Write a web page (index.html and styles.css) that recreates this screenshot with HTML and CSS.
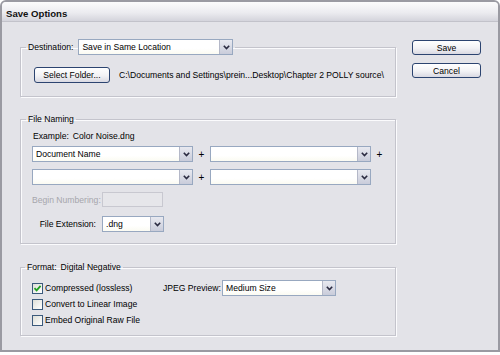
FILE: index.html
```html
<!DOCTYPE html>
<html lang="en">
<head>
    <meta charset="UTF-8">
    <title>Save Options</title>
    <link rel="stylesheet" href="styles.css">
</head>
<body>
    <div class="window">
        <div class="titlebar">Save Options</div>

        <div class="content">
            <div class="groups">
                <!-- Destino -->
                <fieldset class="group">
                    <legend class="legend-row">
                        <span>Destination:</span>
                        <div class="select sel-dest">
                            <span class="value">Save in Same Location</span>
                            <span class="arrow"><svg width="7" height="5" viewBox="0 0 7 5"><polyline points="0.8,0.8 3.5,3.6 6.2,0.8" fill="none" stroke="#2a2a40" stroke-width="1.6"/></svg></span>
                        </div>
                    </legend>
                    <div class="dest-row">
                        <button class="btn btn-folder">Select Folder...</button>
                        <span class="path">C:\Documents and Settings\prein...Desktop\Chapter 2 POLLY source\</span>
                    </div>
                </fieldset>

                <!-- Nome dos arquivos -->
                <fieldset class="group group-naming">
                    <legend class="legend-text">File Naming</legend>
                    <div class="example"><span>Example:</span><span>Color Noise.dng</span></div>

                    <div class="name-row first">
                        <div class="select sel-name">
                            <span class="value">Document Name</span>
                            <span class="arrow"><svg width="7" height="5" viewBox="0 0 7 5"><polyline points="0.8,0.8 3.5,3.6 6.2,0.8" fill="none" stroke="#2a2a40" stroke-width="1.6"/></svg></span>
                        </div>
                        <span class="plus">+</span>
                        <div class="select sel-name">
                            <span class="value"></span>
                            <span class="arrow"><svg width="7" height="5" viewBox="0 0 7 5"><polyline points="0.8,0.8 3.5,3.6 6.2,0.8" fill="none" stroke="#2a2a40" stroke-width="1.6"/></svg></span>
                        </div>
                        <span class="plus">+</span>
                    </div>

                    <div class="name-row">
                        <div class="select sel-name">
                            <span class="value"></span>
                            <span class="arrow"><svg width="7" height="5" viewBox="0 0 7 5"><polyline points="0.8,0.8 3.5,3.6 6.2,0.8" fill="none" stroke="#2a2a40" stroke-width="1.6"/></svg></span>
                        </div>
                        <span class="plus">+</span>
                        <div class="select sel-name">
                            <span class="value"></span>
                            <span class="arrow"><svg width="7" height="5" viewBox="0 0 7 5"><polyline points="0.8,0.8 3.5,3.6 6.2,0.8" fill="none" stroke="#2a2a40" stroke-width="1.6"/></svg></span>
                        </div>
                    </div>

                    <div class="fields">
                        <span class="field-label disabled">Begin Numbering:</span>
                        <div class="input-disabled"></div>

                        <span class="field-label">File Extension:</span>
                        <div class="select sel-ext">
                            <span class="value">.dng</span>
                            <span class="arrow"><svg width="7" height="5" viewBox="0 0 7 5"><polyline points="0.8,0.8 3.5,3.6 6.2,0.8" fill="none" stroke="#2a2a40" stroke-width="1.6"/></svg></span>
                        </div>
                    </div>
                </fieldset>

                <!-- Formato -->
                <fieldset class="group group-format">
                    <legend class="legend-text legend-format"><span>Format:</span><span>Digital Negative</span></legend>
                    <div class="format-body">
                        <div class="checks">
                            <div class="check-row">
                                <span class="check"><svg width="9" height="9" viewBox="0 0 9 9"><polyline points="1.5,4.2 3.6,6.4 7.6,1.8" fill="none" stroke="#21a121" stroke-width="1.8"/></svg></span>
                                <span>Compressed (lossless)</span>
                            </div>
                            <div class="check-row">
                                <span class="check"></span>
                                <span>Convert to Linear Image</span>
                            </div>
                            <div class="check-row">
                                <span class="check"></span>
                                <span>Embed Original Raw File</span>
                            </div>
                        </div>
                        <div class="jpeg">
                            <span class="jpeg-label">JPEG Preview:</span>
                            <div class="select sel-jpeg">
                                <span class="value">Medium Size</span>
                                <span class="arrow"><svg width="7" height="5" viewBox="0 0 7 5"><polyline points="0.8,0.8 3.5,3.6 6.2,0.8" fill="none" stroke="#2a2a40" stroke-width="1.6"/></svg></span>
                            </div>
                        </div>
                    </div>
                </fieldset>
            </div>

            <div class="actions">
                <button class="btn btn-action">Save</button>
                <button class="btn btn-action">Cancel</button>
            </div>
        </div>
    </div>
</body>
</html>
```

FILE: styles.css
```css
* {
    box-sizing: border-box;
}

body {
    margin: 0;
    background-color: #ffffff;
    font-family: "Liberation Sans", Arial, sans-serif;
    font-size: 8.6px;
    color: #000;
}

.window {
    width: 500px;
    height: 352px;
    background-color: #e3e3e8;
    border: 2px solid #9a9aa2;
    border-radius: 6px 6px 0 0;
    display: flex;
    flex-direction: column;
}

.titlebar {
    height: 20px;
    padding: 3px 0 0 4px;
    line-height: 17px;
    font-size: 9.6px;
    font-weight: bold;
    color: #111;
    background: linear-gradient(#fbfbfc, #ececf0 55%, #d4d4dc);
    border-bottom: 1px solid #c2c2ca;
    border-radius: 4px 4px 0 0;
}

.content {
    display: flex;
    padding: 17px 0 0 18px;
}

.groups {
    width: 376px;
}

/* Caixas de grupo */
.group {
    margin: 0;
    padding: 0 0 0 11px;
    min-width: 0;
    border: 1px solid #c4c4cc;
    box-shadow: 1px 1px 0 #fbfbfd, inset 1px 1px 0 #fbfbfd;
}

.legend-row {
    display: flex;
    align-items: center;
    gap: 5px;
    margin-left: -6px;
    padding: 0 2px;
    height: 16px;
}

.legend-text {
    margin-left: -6px;
    padding: 0 2px;
    line-height: 12px;
}

.dest-row {
    display: flex;
    align-items: center;
    gap: 9px;
    margin: 12px 0 13px 2px;
}

.path {
    white-space: nowrap;
}

.group-naming {
    margin-top: 16px;
    padding-bottom: 11px;
}

.example {
    display: flex;
    gap: 4px;
    margin: 5px 0 0 1px;
    line-height: 12px;
}

.name-row {
    display: flex;
    align-items: center;
    margin-top: 7px;
}

.name-row.first {
    margin-top: 4px;
}

.plus {
    width: 17px;
    text-align: center;
    font-size: 10px;
}

.fields {
    display: grid;
    grid-template-columns: 64px auto;
    column-gap: 6px;
    row-gap: 9px;
    align-items: center;
    margin-top: 7px;
}

.field-label {
    text-align: right;
    white-space: nowrap;
}

.field-label.disabled {
    color: #a6a6ac;
}

.input-disabled {
    width: 61px;
    height: 15px;
    border: 1px solid #c8c8d0;
    background-color: #e6e6ea;
}

.group-format {
    margin-top: 17px;
    padding-bottom: 7px;
}

.legend-format {
    display: flex;
    gap: 4px;
    margin-left: -7px;
}

.format-body {
    display: flex;
    align-items: flex-start;
    padding-top: 7px;
}

.checks {
    width: 131px;
}

.check-row {
    display: flex;
    align-items: center;
    gap: 2px;
    height: 16px;
}

.check {
    width: 11px;
    height: 11px;
    border: 1px solid #3c5a7c;
    background: linear-gradient(135deg, #dedfd8, #ffffff);
    display: flex;
    align-items: center;
    justify-content: center;
}

.jpeg {
    display: flex;
    align-items: center;
    gap: 1px;
    height: 16px;
}

.jpeg-label {
    width: 58px;
    white-space: nowrap;
}

/* Listas suspensas */
.select {
    display: flex;
    height: 16px;
    border: 1px solid #98a8c0;
    background: linear-gradient(#ffffff, #ffffff 60%, #fbfbf2);
}

.select .value {
    flex: 1;
    padding-left: 3px;
    line-height: 14px;
    white-space: nowrap;
    overflow: hidden;
}

.select .arrow {
    width: 13px;
    border-left: 1px solid #b4b8c8;
    background: linear-gradient(#e8e9f0, #c9ccda);
    display: flex;
    align-items: center;
    justify-content: center;
}

.sel-dest {
    width: 155px;
}

.sel-name {
    width: 161px;
}

.sel-ext {
    width: 62px;
}

.sel-jpeg {
    width: 114px;
}

/* Botoes */
.btn {
    height: 16px;
    padding: 0;
    font-family: inherit;
    font-size: 8.6px;
    color: #000;
    border: 1px solid #2c4470;
    border-radius: 3px;
    background: linear-gradient(#ffffff, #f2f2f5 55%, #d9d9e2);
    text-align: center;
}

.btn-folder {
    width: 76px;
}

.actions {
    display: flex;
    flex-direction: column;
    gap: 8px;
    margin-left: 16px;
    padding-top: 1px;
}

.btn-action {
    width: 69px;
    height: 15px;
}
```
